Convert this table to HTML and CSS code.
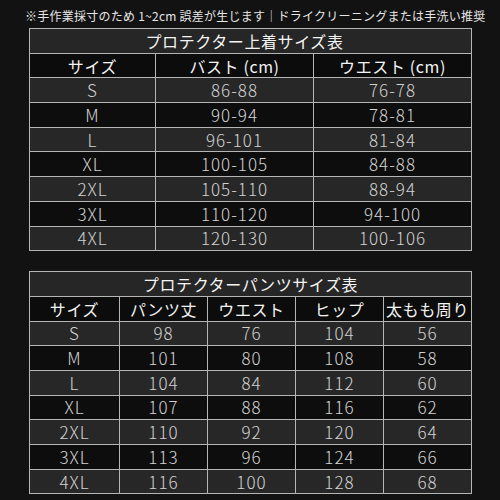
FILE: index.html
```html
<!DOCTYPE html>
<html lang="ja">
<head>
<meta charset="utf-8">
<link rel="stylesheet" href="styles.css">
</head>
<body>
<div class="page">
  <p class="note">※手作業採寸のため 1~2cm 誤差が生じます｜ドライクリーニングまたは手洗い推奨</p>
  <table class="size t1">
    <colgroup><col class="c1a"><col class="c1b"><col class="c1b"></colgroup>
    <tr class="title"><th colspan="3">プロテクター上着サイズ表</th></tr>
    <tr class="head"><th>サイズ</th><th>バスト (cm)</th><th>ウエスト (cm)</th></tr>
    <tr class="g"><td>S</td><td>86-88</td><td>76-78</td></tr>
    <tr class="d"><td>M</td><td>90-94</td><td>78-81</td></tr>
    <tr class="g"><td>L</td><td>96-101</td><td>81-84</td></tr>
    <tr class="d"><td>XL</td><td>100-105</td><td>84-88</td></tr>
    <tr class="g"><td>2XL</td><td>105-110</td><td>88-94</td></tr>
    <tr class="d"><td>3XL</td><td>110-120</td><td>94-100</td></tr>
    <tr class="g"><td>4XL</td><td>120-130</td><td>100-106</td></tr>
  </table>
  <table class="size t2">
    <colgroup><col class="c2a"><col class="c2b"><col class="c2b"><col class="c2b"><col class="c2b"></colgroup>
    <tr class="title"><th colspan="5">プロテクターパンツサイズ表</th></tr>
    <tr class="head"><th>サイズ</th><th>パンツ丈</th><th>ウエスト</th><th>ヒップ</th><th>太もも周り</th></tr>
    <tr class="g"><td>S</td><td>98</td><td>76</td><td>104</td><td>56</td></tr>
    <tr class="d"><td>M</td><td>101</td><td>80</td><td>108</td><td>58</td></tr>
    <tr class="g"><td>L</td><td>104</td><td>84</td><td>112</td><td>60</td></tr>
    <tr class="d"><td>XL</td><td>107</td><td>88</td><td>116</td><td>62</td></tr>
    <tr class="g"><td>2XL</td><td>110</td><td>92</td><td>120</td><td>64</td></tr>
    <tr class="d"><td>3XL</td><td>113</td><td>96</td><td>124</td><td>66</td></tr>
    <tr class="g"><td>4XL</td><td>116</td><td>100</td><td>128</td><td>68</td></tr>
  </table>
</div>
</body>
</html>
```
FILE: styles.css
```css
html, body {
  margin: 0;
  padding: 0;
  background: #121212;
}
body {
  width: 500px;
  height: 500px;
  overflow: hidden;
  font-family: "Noto Sans CJK JP", "Noto Sans", sans-serif;
}
.page {
  display: flex;
  flex-direction: column;
  align-items: flex-start;
  padding: 0 0 0 29px;
}
.note {
  margin: 8px 0 0 -4px;
  height: 20px;
  line-height: 16px;
  font-size: 12px;
  letter-spacing: 0.25px;
  color: #e6e6e6;
  white-space: nowrap;
}
.size {
  border-collapse: collapse;
  table-layout: fixed;
  width: 442px;
  border: 1px solid #b5b5b5;
}
.t2 { margin-top: 20px; }
.c1a { width: 126px; }
.c1b { width: 158px; }
.c2a { width: 90px; }
.c2b { width: 88px; }
.size th, .size td {
  border: 1px solid #b5b5b5;
  padding: 0;
  height: 23.7px;
  text-align: center;
  vertical-align: middle;
  line-height: 20px;
  white-space: nowrap;
}
.size th {
  font-size: 16px;
  font-weight: 400;
  letter-spacing: 0.6px;
  color: #f4f4f4;
}
.size td {
  font-size: 17px;
  font-weight: 300;
  letter-spacing: 1px;
  color: #d2d2d2;
}
.t1 .title th { padding-right: 12px; }
.title th { background: #262626; }
.head th { background: #0c0c0c; }
.g td { background: #272727; }
.d td { background: #0d0d0d; }
```
